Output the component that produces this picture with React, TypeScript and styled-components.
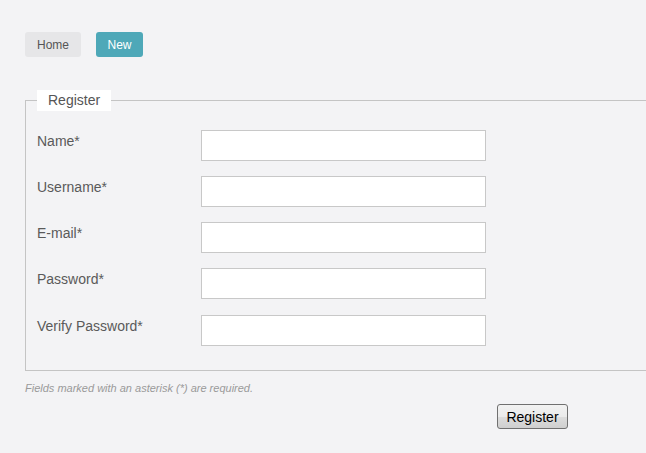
import React from "react";
import styled, { createGlobalStyle } from "styled-components";

const Global = createGlobalStyle`
  html, body { margin: 0; padding: 0; background: #f3f3f5; }
  body { font-family: "Liberation Sans", Arial, sans-serif; color: #555; overflow: hidden; }
  * { box-sizing: border-box; }
`;

const Page = styled.div`
  padding: 32px 0 0 25px;
`;

const Nav = styled.nav`
  display: flex;
  gap: 15px;
`;

const NavButton = styled.a<{ $active?: boolean; $w: number }>`
  display: inline-flex;
  align-items: center;
  justify-content: center;
  height: 25px;
  width: ${(p) => p.$w}px;
  border-radius: 3px;
  font-size: 12px;
  text-decoration: none;
  background: ${(p) => (p.$active ? "#4ea8b8" : "#e6e6e8")};
  color: ${(p) => (p.$active ? "#ffffff" : "#555555")};
`;

const Fieldset = styled.fieldset`
  margin: 33px 0 0 0;
  padding: 19px 0 24px 11px;
  border: 1px solid #c4c4c4;
  border-right: none;
  min-width: 0;
`;

const Legend = styled.legend`
  background: #ffffff;
  padding: 0 11px;
  margin: 0;
  font-size: 14px;
  line-height: 21px;
  color: #555;
`;

const Rows = styled.div`
  display: flex;
  flex-direction: column;
  gap: 15px;
`;

const Row = styled.div<{ $extra?: boolean }>`
  display: grid;
  grid-template-columns: 164px 285px;
  align-items: start;
  margin-top: ${(p) => (p.$extra ? "1px" : "0")};
`;

const Label = styled.label`
  font-size: 14px;
  line-height: 16px;
  padding-top: 3px;
  color: #5a5a5a;
`;

const Input = styled.input`
  height: 31px;
  width: 285px;
  border: 1px solid #c8c8c8;
  background: #ffffff;
  margin: 0;
  padding: 0 6px;
  font-family: "Liberation Sans", Arial, sans-serif;
  font-size: 14px;
  outline: none;
`;

const Note = styled.p`
  margin: 11px 0 0 0;
  font-size: 11px;
  line-height: 13px;
  font-style: italic;
  color: #9a9a9a;
`;

const Actions = styled.div`
  display: flex;
  padding: 9px 0 0 472px;
`;

const SubmitButton = styled.button`
  height: 25px;
  width: 71px;
  padding: 0;
  border: 1px solid #707070;
  border-radius: 3px;
  background: linear-gradient(#f2f2f2 0%, #ebebeb 50%, #dddddd 51%, #cfcfcf 100%);
  font-family: "Liberation Sans", Arial, sans-serif;
  font-size: 14px;
  color: #000;
`;

const fields = [
  { id: "name", label: "Name*", type: "text" },
  { id: "username", label: "Username*", type: "text" },
  { id: "email", label: "E-mail*", type: "text" },
  { id: "password", label: "Password*", type: "password" },
  { id: "password2", label: "Verify Password*", type: "password", extra: true },
];

export default function App() {
  return (
    <>
      <Global />
      <Page>
        <Nav>
          <NavButton href="#" $w={56}>Home</NavButton>
          <NavButton href="#" $w={47} $active>
            New
          </NavButton>
        </Nav>
        <Fieldset>
          <Legend>Register</Legend>
          <Rows>
            {fields.map((f) => (
              <Row key={f.id} $extra={f.extra}>
                <Label htmlFor={f.id}>{f.label}</Label>
                <Input id={f.id} type={f.type} />
              </Row>
            ))}
          </Rows>
        </Fieldset>
        <Note>Fields marked with an asterisk (*) are required.</Note>
        <Actions>
          <SubmitButton type="button">Register</SubmitButton>
        </Actions>
      </Page>
    </>
  );
}
